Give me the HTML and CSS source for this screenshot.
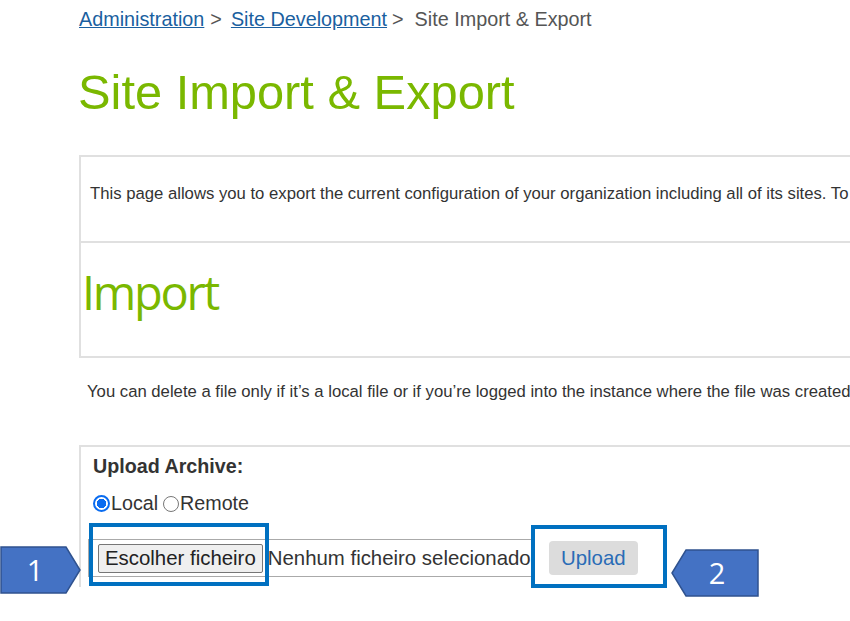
FILE: index.html
```html
<!DOCTYPE html>
<html>
<head>
<meta charset="utf-8">
<link rel="stylesheet" href="styles.css">
</head>
<body>
<div class="page">
  <nav class="crumbs"><a href="#">Administration</a><span class="sep">&gt;</span><a href="#">Site Development</a><span class="sep sep2">&gt;</span><span>Site Import &amp; Export</span></nav>
  <h1 class="title">Site Import &amp; Export</h1>
  <section class="panel intro"><p>This page allows you to export the current configuration of your organization including all of its sites. To</p></section>
  <section class="panel import"><h2>Import</h2></section>
  <p class="note">You can delete a file only if it’s a local file or if you’re logged into the instance where the file was created</p>
  <section class="panel upload">
    <div class="label">Upload Archive:</div>
    <div class="radios">
      <label><span class="radio on"></span>Local</label><label class="gap"><span class="radio"></span>Remote</label>
    </div>
    <div class="filerow">
      <div class="file"><span class="choose">Escolher ficheiro</span><span class="none">Nenhum ficheiro selecionado</span></div>
      <button class="upbtn">Upload</button>
    </div>
  </section>
</div>
<div class="hl hl1"></div>
<div class="hl hl2"></div>
<svg class="tag tag1" width="82" height="48" viewBox="0 0 82 48"><polygon points="1,1 66,1 80,24 66,47 1,47" fill="#4472c4" stroke="#2f528f" stroke-width="1.5"/><text x="35" y="35" text-anchor="middle" font-family="Open Sans, sans-serif" font-size="29" fill="#fff">1</text></svg>
<svg class="tag tag2" width="90" height="48" viewBox="0 0 90 48"><polygon points="88,1 16,1 2,24 16,47 88,47" fill="#4472c4" stroke="#2f528f" stroke-width="1.5"/><text x="47" y="35" text-anchor="middle" font-family="Open Sans, sans-serif" font-size="29" fill="#fff">2</text></svg>
</body>
</html>
```
FILE: styles.css
```css
html, body { margin: 0; padding: 0; background: #fff; overflow: hidden; }
body { font-family: "Liberation Sans", Arial, sans-serif; color: #333; width: 850px; height: 621px; position: relative; }
.page { padding-left: 79px; width: 900px; }
.crumbs { font-size: 19.8px; line-height: 22px; padding-top: 8px; color: #555; }
.crumbs a { color: #1a5fa0; text-decoration: underline; }
.crumbs .sep { margin: 0 9px 0 6px; color: #555; }
.crumbs .sep2 { margin: 0 11px 0 5px; }
.title { font-weight: normal; font-size: 48.8px; line-height: 56px; color: #7ab800; margin: 34px 0 0 -1px; }
.panel { border: 2px solid #e0e0e0; box-sizing: border-box; width: 880px; }
.intro { margin-top: 35px; height: 88px; display: flex; align-items: center; padding: 0 0 10px 9px; }
.intro p { margin: 0; font-size: 16.7px; color: #333; white-space: nowrap; }
.import { border-top: 0; height: 115px; display: flex; align-items: center; padding: 0 0 16px 1px; }
.import h2 { margin: 0; font-family: "Open Sans", sans-serif; font-weight: normal; font-size: 47px; color: #7ab800; letter-spacing: -2.3px; }
.note { margin: 24px 0 0 8px; font-size: 16.7px; color: #333; white-space: nowrap; line-height: 20px; }
.upload { margin-top: 43px; padding: 8px 0 0 12px; border-right: 0; border-bottom: 0; height: 142px; }
.label { font-weight: bold; font-size: 19.7px; color: #333; }
.radios { margin-top: 14px; font-size: 19.7px; display: flex; }
.radios label { display: flex; align-items: center; }
.radios .gap { margin-left: 5px; }
.radio { width: 16px; height: 16px; border: 1px solid #777; border-radius: 50%; box-sizing: border-box; display: inline-block; margin-right: 1px; }
.radio.on { border: 2px solid #0a6cf0; background: radial-gradient(circle, #0a6cf0 0 4.5px, #fff 5px); width: 17px; height: 17px; }
.filerow { display: flex; align-items: center; margin-top: 24px; margin-left: -5px; }
.file { border: 1px solid #aaa; height: 38px; box-sizing: border-box; display: flex; align-items: center; padding-left: 9px; width: 446px; font-size: 20.4px; }
.choose { background: #efefef; border: 1px solid #767676; border-radius: 2px; padding: 2px 6px; margin-right: 5px; color: #222; }
.none { color: #333; white-space: nowrap; }
.upbtn { margin-left: 15px; background: #dcdcdc; border: 0; border-radius: 4px; font-family: inherit; font-size: 20.4px; color: #2a6cb6; padding: 5px 12px; height: 34px; }
.hl { position: absolute; border: 4px solid #0070c0; box-sizing: border-box; }
.hl1 { left: 89px; top: 523px; width: 180px; height: 63px; }
.hl2 { left: 531px; top: 525px; width: 136px; height: 63px; }
.tag { position: absolute; }
.tag1 { left: 0; top: 546px; }
.tag2 { left: 670px; top: 549px; }
```
